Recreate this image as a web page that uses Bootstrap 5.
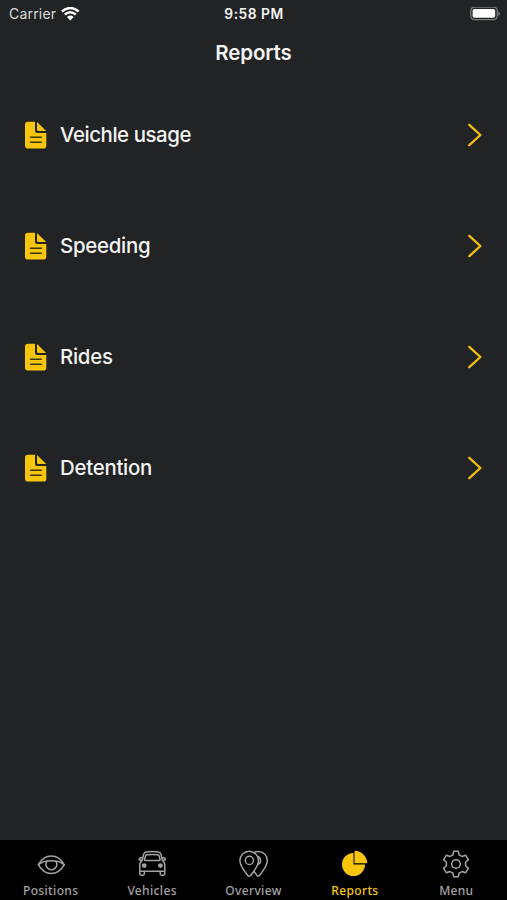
<!DOCTYPE html>
<html lang="en">
<head>
<meta charset="utf-8">
<meta name="viewport" content="width=device-width, initial-scale=1">
<title>Reports</title>
<link href="https://cdn.jsdelivr.net/npm/bootstrap@5.3.0/dist/css/bootstrap.min.css" rel="stylesheet">
<style>
body{background:#212324;color:#f4f4f4;font-family:Inter,"Liberation Sans",sans-serif}
svg{display:block;flex:none}
.status{height:28px;font-size:13.8px;line-height:28px}
.status>div{flex:1 1 0}
.carrier{color:#dcdcdc;font-size:14px;letter-spacing:.2px;padding-left:9px}
.clock{font-weight:600;letter-spacing:.5px;padding-right:1px}
.battery{padding-right:7px}
.screen-title{height:52px;font-size:20.5px;line-height:50px;font-weight:600;letter-spacing:-.15px}
.report-row{height:110.8px;padding:0 25px 0 24.5px;color:inherit}
.report-row span{font-size:20.4px;font-weight:500;line-height:28px;margin-left:13.5px;letter-spacing:-.25px}
.report-row .long-name{letter-spacing:-.42px}
.tabs{height:60px;background:#000}
.tab{flex:1 1 0;color:#a3a3a3;font:500 12px/16px "Noto Sans","Open Sans",sans-serif;letter-spacing:.35px;padding-top:8px}
.tab span{margin-top:3px}
.tab.active{color:#f7c50c}
</style>
<script src="https://cdn.jsdelivr.net/npm/bootstrap@5.3.0/dist/js/bootstrap.bundle.min.js"></script>
</head>
<body class="vh-100 d-flex flex-column overflow-hidden">
<svg width="0" height="0" class="position-absolute">
  <symbol id="doc" viewBox="0 0 22 28"><path fill="#f7c50c" d="M3 .8H10V9.5Q10 12 12.5 12H21.3V24.7Q21.3 27.5 18.5 27.5H3Q0 27.5 0 24.7V3.5Q0 .8 3 .8ZM12 1.1 21.2 10H13.2Q12 10 12 8.8Z"/><path d="M5.5 16.2H16.3M5.5 21.3H16.3" stroke="#3c3513" stroke-width="1.6" stroke-linecap="round"/></symbol>
  <symbol id="chev" viewBox="0 0 14 24"><path d="M1.3 1.8 12.4 12 1.3 22.2" fill="none" stroke="#efbf12" stroke-width="2.3" stroke-linecap="round" stroke-linejoin="round"/></symbol>
</svg>
<header>
  <div class="status d-flex">
    <div class="carrier d-flex align-items-center"><span>Carrier</span>
      <svg class="ms-1" width="20" height="15" viewBox="0 0 20 15" fill="none" stroke="#fff" stroke-width="2.5"><path d="M1.9 4.4Q10.3-2.3 18.7 4.4M4.8 7.5Q10.3 3.1 15.8 7.5"/><path fill="#fff" stroke="none" d="M6.9 9.9Q10.3 7.3 13.7 9.9L10.3 13.4Z"/></svg>
    </div>
    <div class="clock text-center">9:58 PM</div>
    <div class="battery d-flex align-items-center justify-content-end">
      <svg width="30" height="14" viewBox="0 0 30 14"><rect x=".8" y=".2" width="26.4" height="12.4" rx="3.5" fill="none" stroke="#78797a" stroke-width="1.3"/><rect x="2.6" y="2" width="22.6" height="8.8" rx="1.8" fill="#fff"/><path d="M28.2 4.4Q30 4.9 30 6.6T28.2 8.8Z" fill="#78797a"/></svg>
    </div>
  </div>
  <h1 class="screen-title text-center mb-0">Reports</h1>
</header>
<main class="flex-grow-1">
  <a href="#" class="report-row d-flex align-items-center text-decoration-none"><svg width="22" height="28"><use href="#doc"/></svg><span class="long-name">Veichle usage</span><svg class="ms-auto" width="14" height="24"><use href="#chev"/></svg></a>
  <a href="#" class="report-row d-flex align-items-center text-decoration-none"><svg width="22" height="28"><use href="#doc"/></svg><span>Speeding</span><svg class="ms-auto" width="14" height="24"><use href="#chev"/></svg></a>
  <a href="#" class="report-row d-flex align-items-center text-decoration-none"><svg width="22" height="28"><use href="#doc"/></svg><span>Rides</span><svg class="ms-auto" width="14" height="24"><use href="#chev"/></svg></a>
  <a href="#" class="report-row d-flex align-items-center text-decoration-none"><svg width="22" height="28"><use href="#doc"/></svg><span>Detention</span><svg class="ms-auto" width="14" height="24"><use href="#chev"/></svg></a>
</main>
<nav class="tabs d-flex">
  <div class="tab d-flex flex-column align-items-center">
    <svg width="32" height="32" viewBox="0 0 32 32" fill="none" stroke="currentColor" stroke-width="1.5"><path d="M3.3 16.7Q8.3 8 16.3 8T29.3 16.7Q24.3 25.6 16.3 25.6T3.3 16.7Z"/><path d="M3.8 16.4Q8 12.8 16.3 12.8T28.8 16.4"/><path d="M12 13.2A5.3 5.5 0 1 0 20.8 13.2"/></svg><span>Positions</span>
  </div>
  <div class="tab d-flex flex-column align-items-center">
    <svg width="32" height="32" viewBox="0 0 32 32" fill="none" stroke="currentColor" stroke-width="1.5" stroke-linejoin="round"><path d="M6.2 12.8 7.6 6.4Q8.2 4.2 10.4 4Q16.3 3.2 22.2 4Q24.4 4.2 25 6.4L26.4 12.8"/><path d="M10.8 6.8Q16.3 6.3 21.8 6.8Q22.8 6.9 23.1 7.8L24 11.4Q24.2 12.6 23 12.6H9.6Q8.4 12.6 8.6 11.4L9.5 7.8Q9.8 6.9 10.8 6.8Z"/><path d="M6.6 9.8H5Q3 10 3.2 11.8L6 12.4M26 9.8H27.6Q29.6 10 29.4 11.8L26.6 12.4M6.2 12.8Q3.8 14 3.8 17V25.8Q3.8 27.2 5.2 27.2H7Q8.4 27.2 8.4 25.8V23.2H24.2V25.8Q24.2 27.2 25.6 27.2H27.4Q28.8 27.2 28.8 25.8V17Q28.8 14 26.4 12.8M3.8 23.2H28.8"/><circle cx="8.2" cy="17.6" r="1.7" fill="currentColor"/><circle cx="24.4" cy="17.6" r="1.7" fill="currentColor"/></svg><span>Vehicles</span>
  </div>
  <div class="tab d-flex flex-column align-items-center">
    <svg width="32" height="32" viewBox="0 0 32 32" fill="none" stroke="currentColor" stroke-width="1.5" stroke-linejoin="round"><path d="M12.6 27.4Q11.2 28.9 9.8 27.4Q1.9 18 1.9 12.6A9.3 9.3 0 0 1 20.5 12.6Q20.5 18 12.6 27.4Z"/><circle cx="11.4" cy="12.4" r="4.1"/><path d="M15.5 4.8Q17.5 3.4 20.2 3.4A9 9.2 0 0 1 29.3 12.6Q29.3 18.2 21.4 27.4Q20.2 28.8 18.9 27.4L16.1 23.4M19.4 8.6A4 4 0 0 1 19.8 16.3"/></svg><span>Overview</span>
  </div>
  <div class="tab active d-flex flex-column align-items-center">
    <svg width="32" height="32" viewBox="0 0 32 32" fill="currentColor"><path d="M14.5 5V16.5H26A11.5 11.5 0 1 1 14.5 5Z"/><path d="M15.5 2.8A12.6 12.6 0 0 1 28.2 15.3H15.5Z"/></svg><span>Reports</span>
  </div>
  <div class="tab d-flex flex-column align-items-center">
    <svg width="32" height="32" viewBox="0 0 32 32" fill="none" stroke="currentColor" stroke-width="1.5" stroke-linejoin="round"><path d="M13.7 3.2H18.3L19.2 7Q20.8 7.5 22 8.5L25.7 7.3L28.4 11.6L25.5 14.3Q25.8 16 25.5 17.7L28.4 20.4L25.7 24.7L22 23.5Q20.8 24.5 19.2 25L18.3 28.8H13.7L12.8 25Q11.2 24.5 10 23.5L6.3 24.7L3.6 20.4L6.5 17.7Q6.2 16 6.5 14.3L3.6 11.6L6.3 7.3L10 8.5Q11.2 7.5 12.8 7Z"/><circle cx="16" cy="16" r="4.3"/></svg><span>Menu</span>
  </div>
</nav>
</body>
</html>
